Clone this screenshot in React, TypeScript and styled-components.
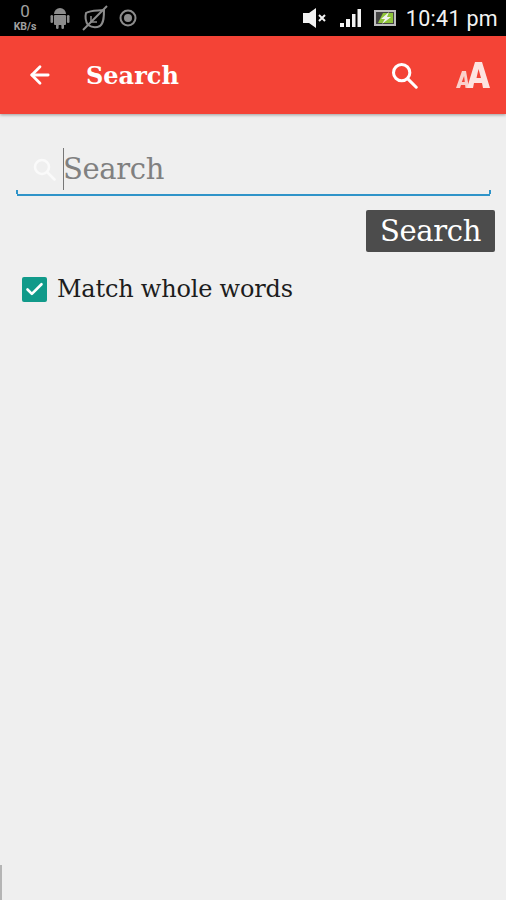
import React from 'react';
import styled, { createGlobalStyle } from 'styled-components';
import { ArrowLeft, Check } from 'lucide-react';

const Global = createGlobalStyle`
  html, body { margin: 0; padding: 0; background: #efefef; }
  body { font-family: "DejaVu Serif", "Liberation Serif", serif; }
  #root { height: 900px; }
`;

const Screen = styled.div`
  position: relative;
  width: 506px;
  height: 900px;
  overflow: hidden;
  background: #efefef;
  display: flex;
  flex-direction: column;
`;

const StatusBar = styled.div`
  height: 36px;
  background: #000;
  display: flex;
  align-items: center;
  padding: 0 8px 0 12px;
  flex-shrink: 0;
`;

const StatusLeft = styled.div`
  display: flex;
  align-items: center;
  gap: 10px;
  flex: 1;
`;

const StatusRight = styled.div`
  display: flex;
  align-items: center;
  gap: 13px;
`;

const Speed = styled.div`
  width: 26px;
  display: flex;
  flex-direction: column;
  align-items: center;
  padding-bottom: 2px;
  color: #a0a0a0;
  font-family: "Roboto", sans-serif;
`;

const SpeedValue = styled.span`
  font-size: 17px;
  line-height: 20px;
`;

const SpeedUnit = styled.span`
  font-size: 10.5px;
  line-height: 12px;
  font-weight: 700;
`;

const Clock = styled.span`
  font-family: "Roboto", sans-serif;
  font-size: 21.5px;
  color: #f2f2f2;
  margin-left: -3px;
  letter-spacing: 0.3px;
`;

const AppBar = styled.header`
  height: 78px;
  background: #f44336;
  box-shadow: 0 1px 3px rgba(0, 0, 0, 0.35);
  display: flex;
  align-items: center;
  padding: 0 16px 0 26px;
  color: #fff;
  flex-shrink: 0;
`;

const Title = styled.h1`
  margin: 0 0 0 32px;
  flex: 1;
  font-size: 24px;
  font-weight: 700;
  letter-spacing: 0;
`;

const BarAction = styled.span`
  display: flex;
  margin-right: 38px;
`;

const Content = styled.main`
  display: flex;
  flex-direction: column;
  padding: 30px 11px 0 17px;
`;

const Field = styled.div`
  height: 52px;
  width: 473px;
  box-sizing: border-box;
  display: flex;
  align-items: center;
  gap: 7px;
  padding: 0 0 0 15px;
  position: relative;
  border-bottom: 2px solid #2f94c9;
`;

const FieldTick = styled.span<{ $side: 'left' | 'right' }>`
  position: absolute;
  bottom: 0;
  ${(p) => p.$side}: -1px;
  width: 2px;
  height: 4px;
  background: #2f94c9;
`;

const Caret = styled.span`
  width: 1px;
  height: 42px;
  background: #777;
  margin-right: -8px;
`;

const Placeholder = styled.span`
  font-size: 29px;
  color: #808080;
  letter-spacing: -0.35px;
`;

const ButtonRow = styled.div`
  display: flex;
  justify-content: flex-end;
  margin-top: 14px;
`;

const SearchButton = styled.button`
  width: 129px;
  height: 42px;
  border: 0;
  border-radius: 2px;
  padding: 0;
  background: #4c4c4c;
  color: #fff;
  font-family: inherit;
  font-size: 29px;
  letter-spacing: -0.35px;
`;

const CheckRow = styled.label`
  display: flex;
  align-items: center;
  gap: 10px;
  margin: 23px 0 0 5px;
`;

const Box = styled.span`
  width: 25px;
  height: 25px;
  border-radius: 2px;
  background: #119a8a;
  color: #fff;
  display: flex;
  align-items: center;
  justify-content: center;
`;

const CheckLabel = styled.span`
  font-size: 24px;
  color: #1d1d1d;
  letter-spacing: -0.2px;
`;

const EdgeMark = styled.div`
  position: absolute;
  left: 0;
  bottom: 0;
  width: 2px;
  height: 35px;
  background: #b5b5b5;
`;

const Magnifier = ({ size, color }: { size: number; color: string }) => (
  <svg width={size} height={size} viewBox="0 0 24 24" fill="none" stroke={color} strokeWidth="2.6" strokeLinecap="round">
    <circle cx="10" cy="10" r="7" />
    <path d="M15.500 15.500 22.500 22.500" />
  </svg>
);

const Android = () => (
  <svg width="24" height="24" viewBox="0 0 24 24" fill="#8c8c8c">
    <path d="M6 8a6 6 0 0 1 12 0z" />
    <rect x="6" y="9" width="12" height="10" rx="1" />
    <rect x="2.5" y="9" width="2.6" height="8" rx="1.3" />
    <rect x="18.9" y="9" width="2.6" height="8" rx="1.3" />
    <rect x="8" y="18" width="2.6" height="5" rx="1.3" />
    <rect x="13.4" y="18" width="2.6" height="5" rx="1.3" />
  </svg>
);

const Leaf = () => (
  <svg width="26" height="26" viewBox="0 0 26 26" fill="none" stroke="#8c8c8c" strokeWidth="2">
    <path d="M4 8c5-3 12-2 18-3 0 6 0 13-4 16-4 2-9 1-12-1C4 17 3 12 4 8z" />
    <path d="M1 25 25 1" />
    <path d="M9 11v6h6" strokeWidth="1.5" />
  </svg>
);

const Record = () => (
  <svg width="20" height="20" viewBox="0 0 20 20">
    <circle cx="10" cy="10" r="7.5" fill="none" stroke="#8c8c8c" strokeWidth="2" />
    <circle cx="10" cy="10" r="4" fill="#8c8c8c" />
  </svg>
);

const Muted = () => (
  <svg width="24" height="20" viewBox="0 0 24 20" fill="#f2f2f2">
    <path d="M0 5h6l7-5v20l-7-5H0z" />
    <path d="m16 7 6 6m0-6-6 6" stroke="#f2f2f2" strokeWidth="2" fill="none" />
  </svg>
);

const Signal = () => (
  <svg width="21" height="20" viewBox="0 0 21 20" fill="#f2f2f2">
    <rect x="0" y="15" width="4" height="4" />
    <rect x="6" y="11" width="4" height="8" />
    <rect x="12" y="6" width="3.5" height="13" />
    <rect x="17.5" y="1" width="3.5" height="18" />
  </svg>
);

const Battery = () => (
  <svg width="22" height="18" viewBox="0 0 22 18">
    <rect x="1" y="2" width="20" height="14" fill="#444" stroke="#bdbdbd" strokeWidth="2" />
    <path d="M9 4h10v10H4z" fill="#8fc43a" />
    <path d="M15 3 7 10h4l-3 5 9-7h-4z" fill="#f2f2f2" />
  </svg>
);

const TextSize = () => (
  <svg width="34" height="28" viewBox="0 0 34 28" fill="#fbd0cb">
    <path fillRule="evenodd" d="M0 27 6 10h4l3 17H9.500l-.4-3H5l-1 3zm5.800-6h3l-.7-6z" />
    <path fillRule="evenodd" d="M11 27 19 1h7l8 26h-7l-1-5h-8l-1 5zm9.500-10h4.500L22.500 8z" fill="#fde3e0" />
  </svg>
);

const App: React.FC = () => {
  return (
    <Screen>
      <Global />
      <StatusBar>
        <StatusLeft>
          <Speed>
            <SpeedValue>0</SpeedValue>
            <SpeedUnit>KB/s</SpeedUnit>
          </Speed>
          <Android />
          <Leaf />
          <Record />
        </StatusLeft>
        <StatusRight>
          <Muted />
          <Signal />
          <Battery />
          <Clock>10:41 pm</Clock>
        </StatusRight>
      </StatusBar>
      <AppBar>
        <ArrowLeft size={28} strokeWidth={2.4} />
        <Title>Search</Title>
        <BarAction>
          <Magnifier size={28} color="#ffffff" />
        </BarAction>
        <TextSize />
      </AppBar>
      <Content>
        <Field>
          <Magnifier size={24} color="#fafafa" />
          <Caret />
          <Placeholder>Search</Placeholder>
          <FieldTick $side="left" />
          <FieldTick $side="right" />
        </Field>
        <ButtonRow>
          <SearchButton>Search</SearchButton>
        </ButtonRow>
        <CheckRow>
          <Box>
            <Check size={21} strokeWidth={3} />
          </Box>
          <CheckLabel>Match whole words</CheckLabel>
        </CheckRow>
      </Content>
      <EdgeMark />
    </Screen>
  );
};

export default App;
